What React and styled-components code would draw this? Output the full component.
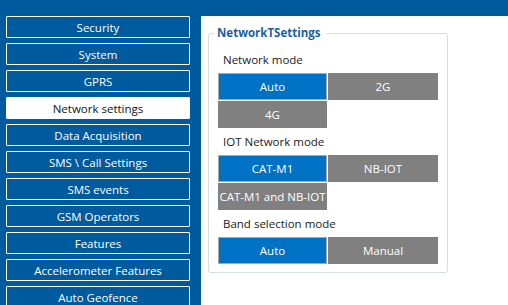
import React from 'react';
import styled, { createGlobalStyle } from 'styled-components';

const Global = createGlobalStyle`
  html, body { margin: 0; padding: 0; }
  body {
    background: #005a9e;
    font-family: "Segoe UI", "Open Sans", sans-serif;
    overflow: hidden;
  }
`;

const Page = styled.div`
  display: flex;
  height: 305px;
  padding-top: 16px;
  box-sizing: border-box;
  background: #005a9e;
`;

const Sidebar = styled.nav`
  width: 201px;
  flex: none;
  box-sizing: border-box;
  padding: 0 11px 0 6px;
  display: flex;
  flex-direction: column;
  gap: 5px;
  overflow: hidden;
`;

const NavButton = styled.div`
  height: 22px;
  flex: none;
  box-sizing: border-box;
  border: 1px solid #ffffff;
  border-radius: 1px;
  background: ${(p) => (p.$active ? '#ffffff' : 'transparent')};
  color: ${(p) => (p.$active ? '#111111' : '#ffffff')};
  display: flex;
  align-items: center;
  justify-content: center;
  font-size: 11.5px;
  white-space: nowrap;
`;

const Content = styled.main`
  flex: 1;
  background: #ffffff;
  padding: 9px 0 0 7px;
`;

const Group = styled.fieldset`
  width: 240px;
  box-sizing: border-box;
  margin: 0;
  border: 1px solid #d5dee6;
  border-radius: 3px;
  padding: 5px 9px 8px 9px;
`;

const Legend = styled.legend`
  padding: 0 5px 0 3px;
  margin-left: -4px;
  font-weight: 700;
  color: #1d5f9e;
  font-size: 11.5px;
  line-height: 16px;
`;

const Label = styled.div`
  padding: 6px 0 5px 5px;
  line-height: 16px;
  font-size: 11.5px;
  color: #1a1a1a;
`;

const Options = styled.div`
  display: grid;
  grid-template-columns: 109px 110px;
  gap: 1px;
`;

const Option = styled.div`
  height: 27px;
  box-sizing: border-box;
  background: ${(p) => (p.$selected ? '#0072c6' : '#808080')};
  border: 1px solid ${(p) => (p.$selected ? '#a8a8a8' : '#808080')};
  color: #ffffff;
  display: flex;
  align-items: center;
  justify-content: center;
  font-size: 11.5px;
  white-space: nowrap;
  overflow: hidden;
`;

const navItems = [
  'Security',
  'System',
  'GPRS',
  'Network settings',
  'Data Acquisition',
  'SMS \\ Call Settings',
  'SMS events',
  'GSM Operators',
  'Features',
  'Accelerometer Features',
  'Auto Geofence',
];

const sections = [
  { label: 'Network mode', options: ['Auto', '2G', '4G'], selected: 0 },
  { label: 'IOT Network mode', options: ['CAT-M1', 'NB-IOT', 'CAT-M1 and NB-IOT'], selected: 0 },
  { label: 'Band selection mode', options: ['Auto', 'Manual'], selected: 0 },
];

export default function App() {
  return (
    <>
      <Global />
      <Page>
        <Sidebar>
          {navItems.map((item) => (
            <NavButton key={item} $active={item === 'Network settings'}>
              {item}
            </NavButton>
          ))}
        </Sidebar>
        <Content>
          <Group>
            <Legend>NetworkTSettings</Legend>
            {sections.map((s) => (
              <React.Fragment key={s.label}>
                <Label>{s.label}</Label>
                <Options>
                  {s.options.map((o, i) => (
                    <Option key={o} $selected={i === s.selected}>
                      {o}
                    </Option>
                  ))}
                </Options>
              </React.Fragment>
            ))}
          </Group>
        </Content>
      </Page>
    </>
  );
}
